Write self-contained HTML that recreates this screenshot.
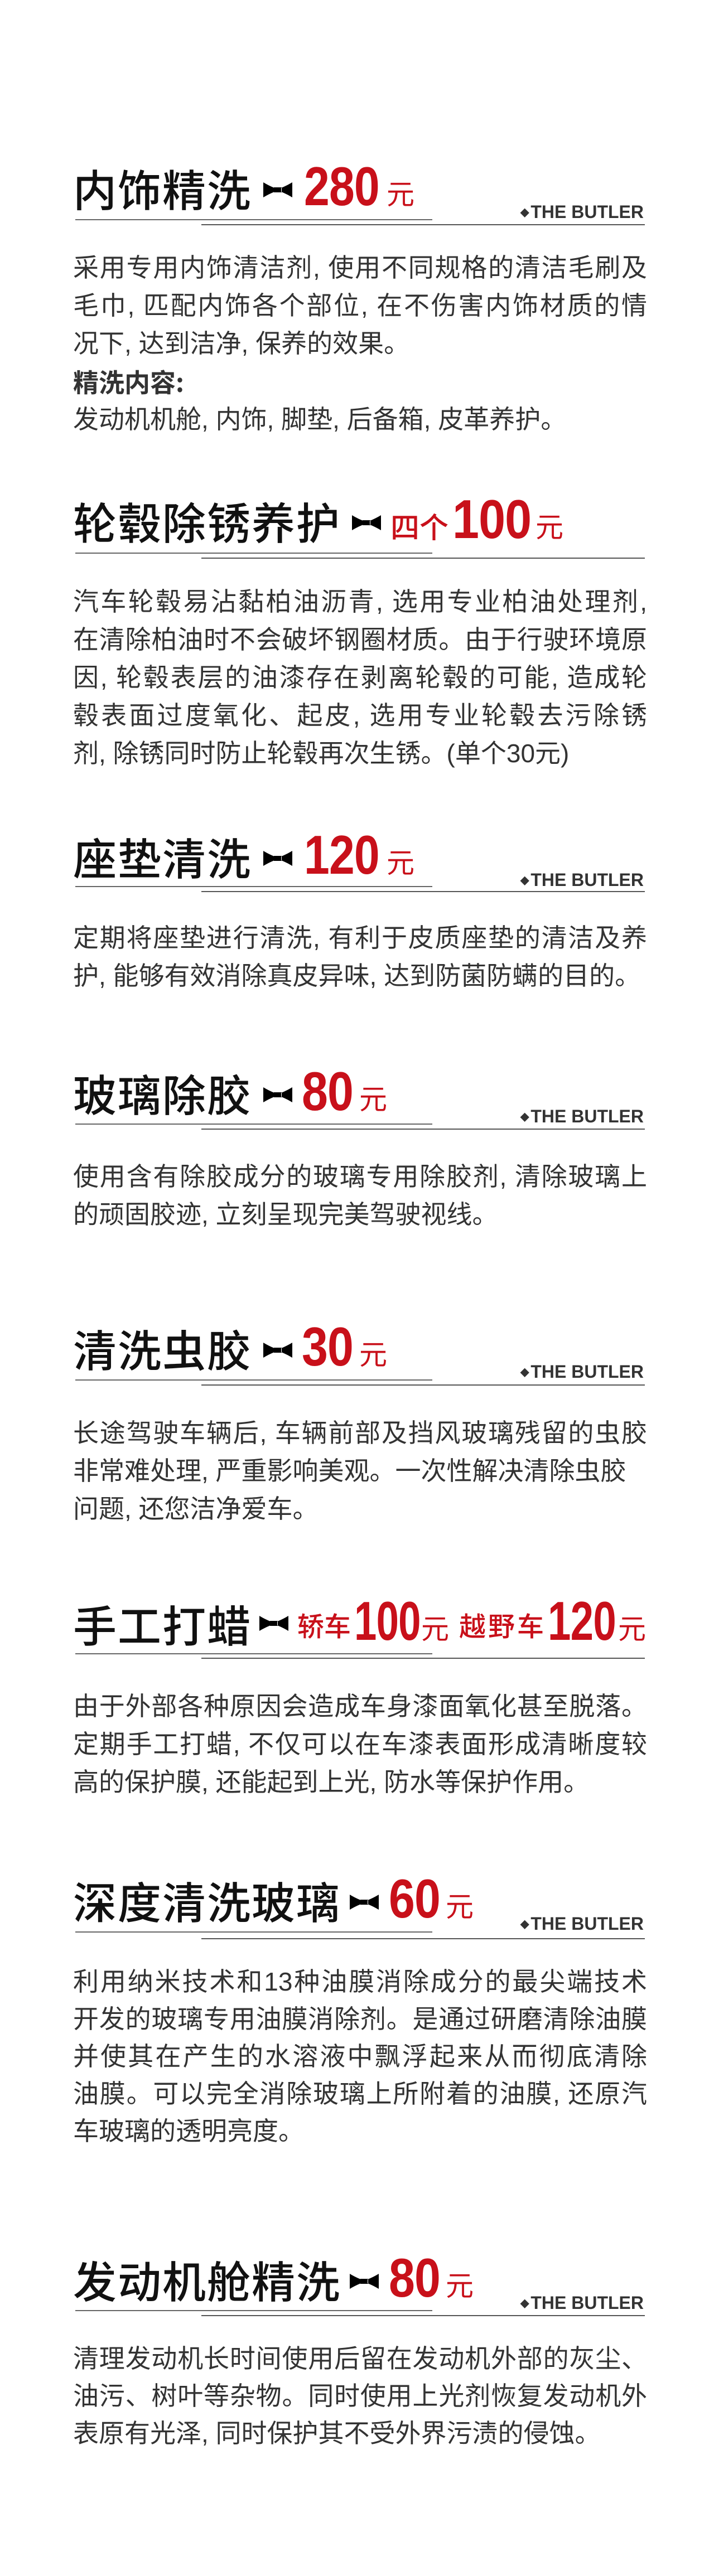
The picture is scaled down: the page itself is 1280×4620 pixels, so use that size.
<!DOCTYPE html>
<html><head><meta charset="utf-8">
<style>
*{margin:0;padding:0;box-sizing:border-box}
html,body{width:1280px;height:4620px;background:#fff;overflow:hidden}
body{position:relative;font-family:"Liberation Sans","Noto Sans CJK SC",sans-serif}
.a{position:absolute;white-space:nowrap}
.t{font-family:"Noto Sans CJK SC",sans-serif;font-size:78px;line-height:80px;color:#111;font-weight:500;letter-spacing:2px}
.d{font-family:"Liberation Sans",sans-serif;font-weight:bold;font-size:98px;line-height:98px;color:#c8101a;transform-origin:left top;letter-spacing:-1px}
.y{font-family:"Noto Sans CJK SC",sans-serif;font-size:50px;line-height:50px;color:#c8101a}
.r{font-family:"Noto Sans CJK SC",sans-serif;font-size:48px;line-height:50px;color:#c8101a;font-weight:500}
.l1{height:2px;background:#666;left:135px;width:640px}
.l2{height:2px;background:#555;left:361px;width:795px}
.bt{font-family:"Liberation Sans",sans-serif;font-weight:bold;font-size:32px;line-height:32px;color:#333;right:126px}
.bt i{font-style:normal;font-size:20px;vertical-align:4px;margin-right:3px}
.b{left:131px;width:1029px;font-size:46px;line-height:68px;color:#333}
.b div{height:68px;white-space:nowrap;text-align:justify;text-align-last:justify}
.b div.e{text-align:left;text-align-last:left}
.b div.k{font-weight:bold;font-family:"Noto Sans CJK SC",sans-serif}
</style></head><body>

<svg width="0" height="0" style="position:absolute"><defs><symbol id="bow" viewBox="0 0 52 27"><path d="M0 0 Q10 6 20 10 L20 17 Q10 21 0 27 Z M52 0 Q42 6 32 10 L32 17 Q42 21 52 27 Z M19 9 H33 V18 H19 Z" fill="#000"/></symbol></defs></svg>

<!-- S1 T=302 -->
<div class="a t" style="left:131px;top:297px">内饰精洗</div>
<svg class="a" style="left:472px;top:327px" width="52" height="27"><use href="#bow"/></svg>
<div class="a d" style="left:545px;top:285px;transform:scaleX(0.84)">280</div>
<div class="a y" style="left:693px;top:320px">元</div>
<div class="a bt" style="top:364px"><i>◆</i>THE BUTLER</div>
<div class="a l1" style="top:393px"></div>
<div class="a l2" style="top:402px"></div>
<div class="a b" style="top:446px">
<div>采用专用内饰清洁剂, 使用不同规格的清洁毛刷及</div>
<div>毛巾, 匹配内饰各个部位, 在不伤害内饰材质的情</div>
<div class="e">况下, 达到洁净, 保养的效果。</div>
<div class="e k">精洗内容:</div>
<div class="e">发动机机舱, 内饰, 脚垫, 后备箱, 皮革养护。</div>
</div>

<!-- S2 T=899 -->
<div class="a t" style="left:131px;top:894px">轮毂除锈养护</div>
<svg class="a" style="left:631px;top:924px" width="52" height="27"><use href="#bow"/></svg>
<div class="a r" style="left:700px;top:918px;font-size:52px">四个</div>
<div class="a d" style="left:811px;top:882px;transform:scaleX(0.88)">100</div>
<div class="a y" style="left:960px;top:917px">元</div>
<div class="a l1" style="top:991px"></div>
<div class="a l2" style="top:1000px"></div>
<div class="a b" style="top:1045px">
<div>汽车轮毂易沾黏柏油沥青, 选用专业柏油处理剂,</div>
<div>在清除柏油时不会破坏钢圈材质。由于行驶环境原</div>
<div>因, 轮毂表层的油漆存在剥离轮毂的可能, 造成轮</div>
<div>毂表面过度氧化、起皮, 选用专业轮毂去污除锈</div>
<div class="e">剂, 除锈同时防止轮毂再次生锈。(单个30元)</div>
</div>

<!-- S3 T=1501 -->
<div class="a t" style="left:131px;top:1496px">座垫清洗</div>
<svg class="a" style="left:472px;top:1526px" width="52" height="27"><use href="#bow"/></svg>
<div class="a d" style="left:545px;top:1484px;transform:scaleX(0.84)">120</div>
<div class="a y" style="left:693px;top:1519px">元</div>
<div class="a bt" style="top:1562px"><i>◆</i>THE BUTLER</div>
<div class="a l1" style="top:1589px"></div>
<div class="a l2" style="top:1598px"></div>
<div class="a b" style="top:1648px">
<div>定期将座垫进行清洗, 有利于皮质座垫的清洁及养</div>
<div class="e">护, 能够有效消除真皮异味, 达到防菌防螨的目的。</div>
</div>

<!-- S4 T=1925 -->
<div class="a t" style="left:131px;top:1920px">玻璃除胶</div>
<svg class="a" style="left:472px;top:1950px" width="52" height="27"><use href="#bow"/></svg>
<div class="a d" style="left:541px;top:1908px;transform:scaleX(0.86)">80</div>
<div class="a y" style="left:644px;top:1943px">元</div>
<div class="a bt" style="top:1986px"><i>◆</i>THE BUTLER</div>
<div class="a l1" style="top:2015px"></div>
<div class="a l2" style="top:2024px"></div>
<div class="a b" style="top:2076px">
<div>使用含有除胶成分的玻璃专用除胶剂, 清除玻璃上</div>
<div class="e">的顽固胶迹, 立刻呈现完美驾驶视线。</div>
</div>

<!-- S5 T=2383 -->
<div class="a t" style="left:131px;top:2378px">清洗虫胶</div>
<svg class="a" style="left:472px;top:2408px" width="52" height="27"><use href="#bow"/></svg>
<div class="a d" style="left:541px;top:2366px;transform:scaleX(0.86)">30</div>
<div class="a y" style="left:644px;top:2401px">元</div>
<div class="a bt" style="top:2444px"><i>◆</i>THE BUTLER</div>
<div class="a l1" style="top:2474px"></div>
<div class="a l2" style="top:2483px"></div>
<div class="a b" style="top:2536px">
<div>长途驾驶车辆后, 车辆前部及挡风玻璃残留的虫胶</div>
<div class="e">非常难处理, 严重影响美观。一次性解决清除虫胶</div>
<div class="e">问题, 还您洁净爱车。</div>
</div>

<!-- S6 T=2877 -->
<div class="a t" style="left:131px;top:2872px">手工打蜡</div>
<svg class="a" style="left:465px;top:2898px" width="52" height="27"><use href="#bow"/></svg>
<div class="a r" style="left:533px;top:2888px">轿车</div>
<div class="a d" style="left:635px;top:2858px;transform:scaleX(0.74)">100</div>
<div class="a y" style="left:755px;top:2893px">元</div>
<div class="a r" style="left:823px;top:2888px;letter-spacing:4px">越野车</div>
<div class="a d" style="left:982px;top:2858px;transform:scaleX(0.76)">120</div>
<div class="a y" style="left:1108px;top:2893px">元</div>
<div class="a l1" style="top:2965px"></div>
<div class="a l2" style="top:2973px"></div>
<div class="a b" style="top:3026px">
<div>由于外部各种原因会造成车身漆面氧化甚至脱落。</div>
<div>定期手工打蜡, 不仅可以在车漆表面形成清晰度较</div>
<div class="e">高的保护膜, 还能起到上光, 防水等保护作用。</div>
</div>

<!-- S7 T=3373 -->
<div class="a t" style="left:131px;top:3368px">深度清洗玻璃</div>
<svg class="a" style="left:627px;top:3398px" width="52" height="27"><use href="#bow"/></svg>
<div class="a d" style="left:697px;top:3356px;transform:scaleX(0.86)">60</div>
<div class="a y" style="left:799px;top:3391px">元</div>
<div class="a bt" style="top:3434px"><i>◆</i>THE BUTLER</div>
<div class="a l1" style="top:3464px"></div>
<div class="a l2" style="top:3476px"></div>
<div class="a b" style="top:3521px;line-height:67px">
<div style="height:67px">利用纳米技术和13种油膜消除成分的最尖端技术</div>
<div style="height:67px">开发的玻璃专用油膜消除剂。是通过研磨清除油膜</div>
<div style="height:67px">并使其在产生的水溶液中飘浮起来从而彻底清除</div>
<div style="height:67px">油膜。可以完全消除玻璃上所附着的油膜, 还原汽</div>
<div class="e" style="height:67px">车玻璃的透明亮度。</div>
</div>

<!-- S8 T=4053 -->
<div class="a t" style="left:131px;top:4048px">发动机舱精洗</div>
<svg class="a" style="left:627px;top:4078px" width="52" height="27"><use href="#bow"/></svg>
<div class="a d" style="left:697px;top:4036px;transform:scaleX(0.86)">80</div>
<div class="a y" style="left:799px;top:4071px">元</div>
<div class="a bt" style="top:4114px"><i>◆</i>THE BUTLER</div>
<div class="a l1" style="top:4143px"></div>
<div class="a l2" style="top:4152px"></div>
<div class="a b" style="top:4197px;line-height:67px">
<div style="height:67px">清理发动机长时间使用后留在发动机外部的灰尘、</div>
<div style="height:67px">油污、树叶等杂物。同时使用上光剂恢复发动机外</div>
<div class="e" style="height:67px">表原有光泽, 同时保护其不受外界污渍的侵蚀。</div>
</div>

</body></html>
